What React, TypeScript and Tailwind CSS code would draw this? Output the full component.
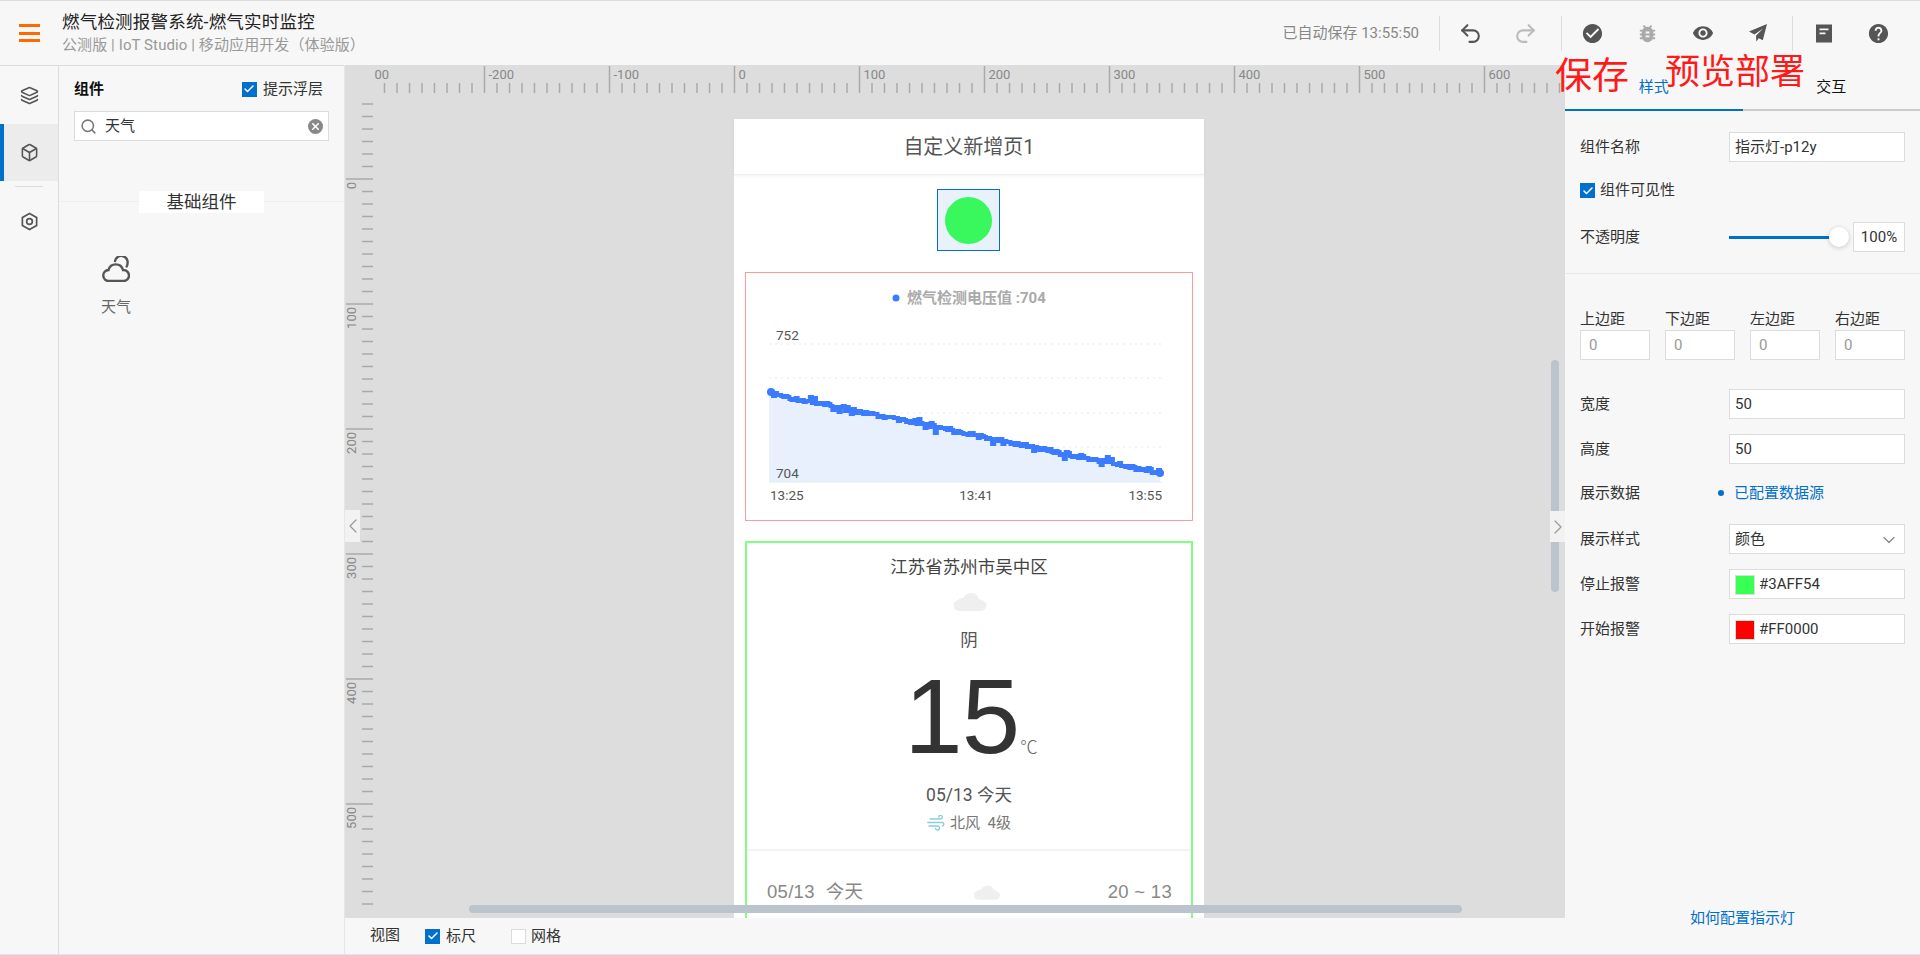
import {
  ChevronDown,
  ChevronLeft,
  ChevronRight,
  Layers,
  Box,
  Search,
  Check,
  Undo2,
  Redo2,
  X,
} from 'lucide-react';
import { MdBugReport, MdCheckCircle, MdHelp, MdVisibility } from 'react-icons/md';

const HEADER_ICONS = 'flex h-[55px] w-[55px] items-center justify-center';

// ruler: 100 units = 125px because the page was taken at 125% zoom
function Rulers() {
  const hTicks = [];
  for (let k = -31; k < 68; k++) hTicks.push(k);
  const vTicks = [];
  for (let k = -6; k < 59; k++) vTicks.push(k);

  return (
    <svg className="absolute left-0 top-0" width="1221" height="853" fontFamily="Roboto, sans-serif">
      {hTicks.map((k) => {
        const x = 389.5 + k * 12.5;
        const major = k % 10 === 0;
        return (
          <g key={k}>
            <line x1={x} x2={x} y1={major ? 1 : 18} y2={28} stroke="#aaa" strokeWidth="1.5" />
            {major && (
              <text x={x + 4} y={14} fontSize="13" fill="#888">
                {k * 10}
              </text>
            )}
          </g>
        );
      })}
      <rect x="0" y="0" width="29" height="30" fill="#dddddd" />
      {vTicks.map((k) => {
        const y = 114 + k * 12.5;
        const major = k % 10 === 0;
        return (
          <g key={k}>
            <line x1={major ? 1 : 17} x2={28} y1={y} y2={y} stroke="#aaa" strokeWidth="1.5" />
            {major && (
              <text
                transform={`translate(11 ${y + 3}) rotate(-90)`}
                textAnchor="end"
                fontSize="13"
                fill="#888"
              >
                {k * 10}
              </text>
            )}
          </g>
        );
      })}
    </svg>
  );
}

function noiseAt(i: number) {
  const n = Math.sin(i * 12.9898) * 43758.5453;
  return n - Math.floor(n);
}

// stepped, noisy readings falling from 121 to 200
function buildLine() {
  const steps = 190;
  let d = '';
  let first = 0;
  let lastY = 0;
  for (let i = 0; i <= steps; i++) {
    const x = 25 + (389 * i) / steps;
    const base = 121 + (79 * i) / steps;
    const spike = noiseAt(i + 300) > 0.85 ? (noiseAt(i + 600) - 0.5) * 10 : 0;
    const y = Math.round(base + (noiseAt(i) - 0.5) * 3.5 + spike);
    if (i === 0) {
      d = `M${x} ${y}`;
      first = y;
    } else {
      d += ` H${x.toFixed(1)} V${y}`;
    }
    lastY = y;
  }
  return { d, first, lastY };
}

function GasChart() {
  const { d, first, lastY } = buildLine();

  return (
    <svg width="446" height="247" fontFamily="Roboto, 'Noto Sans CJK SC', sans-serif">
      <circle cx="150" cy="25" r="3.5" fill="#3a7bff" />
      <text x="161" y="30" fontSize="15" fill="#aaa" fontWeight="700">
        燃气检测电压值 :704
      </text>
      {[71, 105, 140, 174].map((y) => (
        <line key={y} x1="23" x2="416" y1={y} y2={y} stroke="#e8e8e8" strokeDasharray="2 4" />
      ))}
      <path d={`${d} V209 H23 V${first} Z`} fill="#e8f0fe" />
      <line x1="23" x2="416" y1="209" y2="209" stroke="#e3e9f6" />
      <path d={d} fill="none" stroke="#3a7bff" strokeWidth="4" />
      <circle cx="25" cy={first} r="4" fill="#3a7bff" />
      <circle cx="414" cy={lastY} r="4" fill="#3a7bff" />
      <text x="30" y="67" fontSize="13.5" fill="#555">
        752
      </text>
      <text x="30" y="205" fontSize="13.5" fill="#555">
        704
      </text>
      <text x="24" y="227" fontSize="13.5" fill="#555">
        13:25
      </text>
      <text x="230" y="227" fontSize="13.5" fill="#555" textAnchor="middle">
        13:41
      </text>
      <text x="416" y="227" fontSize="13.5" fill="#555" textAnchor="end">
        13:55
      </text>
    </svg>
  );
}

function CloudBlob({ className }: { className: string }) {
  return (
    <svg className={className} viewBox="0 0 36 19">
      <path
        d="M7 19a6 6 0 0 1-1-11.8C7 6 9.500 5 11 5.500 13 1.500 17 0 20 0c4 0 7 2.500 8 6.500 4 .5 8 3 8 6.500a6 6 0 0 1-6 6Z"
        fill="#efefef"
      />
    </svg>
  );
}

function WindIcon() {
  return (
    <svg viewBox="0 0 18 16" className="h-[16px] w-[18px]" fill="none" stroke="#8ccbd8" strokeWidth="1.300" strokeLinecap="round">
      <path d="M3 4h10.500a1.800 1.800 0 1 0-1.800-1.800" />
      <path d="M0.700 7.500h14.800a1.800 1.800 0 0 1 0 3.500" />
      <path d="M2 11h8.500a2 2 0 1 1-2 2.200" />
    </svg>
  );
}

function Checkbox({ checked }: { checked: boolean }) {
  return (
    <span
      className={`flex h-[15px] w-[15px] shrink-0 items-center justify-center ${
        checked ? 'bg-[#0070cc]' : 'border border-[#dcdcdc] bg-white'
      }`}
    >
      {checked && <Check className="h-[12px] w-[12px] text-white" strokeWidth={3} />}
    </span>
  );
}

function Field({ children, className = '' }: { children: React.ReactNode; className?: string }) {
  return (
    <div
      className={`flex h-[30px] items-center border border-[#dcdcdc] bg-white px-[5px] pt-[1px] text-[15px] text-[#333] ${className}`}
    >
      {children}
    </div>
  );
}

function PropRow({ label, className = '', children }: { label: string; className?: string; children: React.ReactNode }) {
  return (
    <div className={`flex h-[30px] items-center ${className}`}>
      <span className="w-[149px] shrink-0 pt-[1px] text-[15px] text-[#333]">{label}</span>
      <div className="flex-1">{children}</div>
    </div>
  );
}

function ColorField({ color, value }: { color: string; value: string }) {
  return (
    <Field>
      <span className="mr-[4px] h-[20px] w-[20px] border border-[#dcdcdc]" style={{ backgroundColor: color }} />
      {value}
    </Field>
  );
}

export default function App() {
  return (
    <div className="flex h-[955px] w-[1920px] flex-col overflow-hidden border-b border-[#d3e9f2] bg-[#f7f7f7] font-['Roboto','Noto_Sans_CJK_SC',sans-serif] text-[#333]">
      {/* Header */}
      <header className="flex h-[65px] shrink-0 items-center border-t border-[#dddddd] bg-[#f7f7f7] pr-[14px]">
        <div className="ml-[19px] flex w-[21px] flex-col gap-[4.500px]">
          <span className="h-[3px] bg-[#ff6a00]" />
          <span className="h-[3px] bg-[#ff6a00]" />
          <span className="h-[3px] bg-[#ff6a00]" />
        </div>
        <div className="ml-[22px]">
          <div className="text-[17.5px] leading-[24px] tracking-[0.2px] text-[#222]">燃气检测报警系统-燃气实时监控</div>
          <div className="text-[15px] leading-[22px] tracking-[0.1px] text-[#999]">公测版 | IoT Studio | 移动应用开发（体验版）</div>
        </div>
        <div className="ml-auto mr-[20px] text-[15px] text-[#888]">已自动保存 13:55:50</div>
        <span className="h-[35px] w-px bg-[#dddddd]" />
        <div className="ml-[3px] flex">
          <span className={HEADER_ICONS}>
            <Undo2 className="h-[25px] w-[25px] text-[#555]" strokeWidth={2} />
          </span>
          <span className={HEADER_ICONS}>
            <Redo2 className="h-[25px] w-[25px] text-[#bbb]" strokeWidth={2} />
          </span>
        </div>
        <span className="ml-[8px] h-[35px] w-px bg-[#dddddd]" />
        <div className="ml-[3px] flex">
          <span className={HEADER_ICONS}>
            <MdCheckCircle className="h-[23px] w-[23px] text-[#555]" />
          </span>
          <span className={HEADER_ICONS}>
            <MdBugReport className="h-[23px] w-[23px] text-[#aaa]" />
          </span>
          <span className={HEADER_ICONS}>
            <MdVisibility className="h-[22px] w-[22px] text-[#555]" />
          </span>
          <span className={HEADER_ICONS}>
            <svg viewBox="0 0 20 20" className="h-[20px] w-[20px]" fill="#555">
              <path d="M19 1 1 8.500l5.500 3L15 5.500 8 12.800l.3 5.700 2.500-3.300 4 2Z" />
            </svg>
          </span>
        </div>
        <span className="ml-[7px] h-[35px] w-px bg-[#dddddd]" />
        <div className="ml-[3px] flex">
          <span className={HEADER_ICONS}>
            <svg viewBox="0 0 16 18" className="h-[19px] w-[16px]">
              <path fillRule="evenodd" fill="#555" d="M0 0h16v18H0ZM3.500 4v1.800h9V4ZM3.500 8v1.800h6V8Z" />
            </svg>
          </span>
          <span className={HEADER_ICONS}>
            <MdHelp className="h-[23px] w-[23px] text-[#555]" />
          </span>
        </div>
      </header>

      <div className="flex min-h-0 flex-1">
        {/* Left rail */}
        <nav className="w-[59px] shrink-0 border-r border-t border-[#dddddd]">
          <div className="flex h-[58px] items-center justify-center">
            <Layers className="h-[19px] w-[19px] text-[#555]" />
          </div>
          <div className="flex h-[57px] items-center justify-center border-l-[4px] border-[#0070cc] bg-[#ececec] pr-[4px]">
            <Box className="h-[19px] w-[19px] text-[#555]" />
          </div>
          <div className="mx-[15px] mt-[5px] h-px bg-[#dddddd]" />
          <div className="flex h-[68px] items-center justify-center">
            <svg viewBox="0 0 20 20" className="h-[19px] w-[19px]" fill="none" stroke="#555" strokeWidth="1.800">
              <path d="M10 1.500 17.500 5.800v8.400L10 18.500 2.500 14.200V5.800Z" />
              <circle cx="10" cy="10" r="3" />
            </svg>
          </div>
        </nav>

        {/* Component panel */}
        <aside className="w-[285px] shrink-0 border-t border-[#dddddd]">
          <div className="flex h-[45px] items-center justify-between pl-[15px] pr-[21px] pt-[1px]">
            <span className="text-[15px] font-bold text-[#111]">组件</span>
            <label className="flex items-center gap-[6px] text-[15px] text-[#333]">
              <Checkbox checked />
              提示浮层
            </label>
          </div>
          <div className="mx-[15px] flex h-[30px] items-center border border-[#dcdcdc] bg-white pl-[5px] pr-[5px] text-[15px] text-[#333]">
            <Search className="h-[17px] w-[17px] text-[#777]" strokeWidth={2.2} />
            <span className="ml-[8px]">天气</span>
            <span className="ml-auto flex h-[15px] w-[15px] items-center justify-center rounded-full bg-[#888]">
              <X className="h-[11px] w-[11px] text-white" strokeWidth={3.5} />
            </span>
          </div>
          <div className="mt-[50px] flex h-[22px] items-center justify-center bg-[linear-gradient(#0000_10px,#eeeeee_10px,#eeeeee_11px,#0000_11px)]">
            <span className="w-[125px] bg-white text-center text-[17.5px] leading-[22px] text-[#333]">基础组件</span>
          </div>
          <div className="ml-[27px] mt-[43px] flex w-[60px] flex-col items-center">
            <svg viewBox="0 0 28 26" className="h-[26px] w-[28px]" fill="none" stroke="#555" strokeWidth="2.400" strokeLinecap="round">
              <path d="M7 25a5.500 5.500 0 0 1-.5-11 7.500 7.500 0 0 1 14.500 0h.5a5.500 5.500 0 0 1 0 11Z" />
              <path d="M13 5a6 6 0 0 1 12.500 2.500c0 1-.3 2-.8 3" />
            </svg>
            <span className="mt-[14px] text-[15px] leading-[22px] text-[#666]">天气</span>
          </div>
        </aside>

        {/* Canvas */}
        <main className="flex w-[1221px] shrink-0 flex-col border-l border-[#e6e6e6]">
          <div className="relative min-h-0 flex-1 overflow-hidden bg-[#dddddd]">
            <Rulers />
            <div className="relative ml-[389px] mt-[54px] h-[900px] w-[470px] bg-white">
              <div className="flex h-[56px] items-center justify-center border-b border-[#eeeeee] text-[20px] text-[#555] shadow-[0_1px_3px_rgba(0,0,0,0.05)]">
                自定义新增页1
              </div>
              <div className="ml-[203px] mt-[14px] flex h-[62px] w-[63px] items-center justify-center border border-[#0070cc] bg-[#e9f2fa]">
                <span className="h-[47px] w-[47px] rounded-full bg-[#38f85e]" />
              </div>
              <div className="ml-[11px] mt-[21px] h-[249px] w-[448px] border border-[#ff9a9a]">
                <GasChart />
              </div>
              <div className="ml-[11px] mt-[20px] h-[500px] w-[448px] border-2 border-[#80ff80] text-center">
                <div className="mt-[12px] text-[17.5px] leading-[24px] text-[#444]">江苏省苏州市吴中区</div>
                <CloudBlob className="mx-auto mt-[14px] h-[18px] w-[35px]" />
                <div className="mt-[17px] text-[17.5px] leading-[24px] text-[#555]">阴</div>
                <div className="mt-[12px] flex h-[105px] items-end justify-center pl-[4px]">
                  <span className="font-['Liberation_Sans',sans-serif] text-[105px] leading-[105px] tracking-[-1px] text-[#333]">
                    15
                  </span>
                  <span className="mb-[12px] ml-[1px] text-[17.5px] font-light leading-[20px] text-[#666]">℃</span>
                </div>
                <div className="mt-[14px] text-[17.5px] leading-[24px] text-[#555]">05/13 今天</div>
                <div className="mt-[6px] flex items-center justify-center gap-[5px] text-[15px] leading-[20px] text-[#777]">
                  <WindIcon />
                  北风&nbsp;&nbsp;4级
                </div>
                <div className="mt-[16px] h-[2px] bg-[#f3f3f3]" />
                <div className="mt-[29px] flex items-center justify-between pl-[20px] pr-[19px] font-['Liberation_Sans','Noto_Sans_CJK_SC',sans-serif] text-[18.5px] leading-[24px] tracking-[0.3px] text-[#888]">
                  <span>05/13&nbsp;&nbsp;今天</span>
                  <CloudBlob className="ml-[2px] h-[15px] w-[27px]" />
                  <span>20 ~ 13</span>
                </div>
              </div>
            </div>
            {/* scrollbars and collapse handles */}
            <span className="absolute left-[124px] top-[840px] h-[8px] w-[993px] rounded-full bg-[#bbc3cc]" />
            <span className="absolute left-[1206px] top-[295px] h-[232px] w-[8px] rounded-full bg-[#bbc3cc]" />
            <span className="absolute left-0 top-[445px] flex h-[32px] w-[15px] items-center justify-center bg-[#f2f2f2]">
              <ChevronLeft className="h-[24px] w-[24px] shrink-0 text-[#999]" strokeWidth={1.2} />
            </span>
            <span className="absolute left-[1205px] top-[446px] flex h-[31px] w-[15px] items-center justify-center bg-[#f2f2f2]">
              <ChevronRight className="h-[24px] w-[24px] shrink-0 text-[#999]" strokeWidth={1.2} />
            </span>
          </div>
          <div className="flex h-[36px] shrink-0 items-center bg-[#f7f7f7] pl-[25px] text-[15px] text-[#333]">
            <span className="mb-[2px]">视图</span>
            <span className="ml-[25px] flex items-center gap-[6px]">
              <Checkbox checked />
              标尺
            </span>
            <span className="ml-[35px] flex items-center gap-[5px]">
              <Checkbox checked={false} />
              网格
            </span>
          </div>
        </main>

        {/* Properties panel */}
        <aside className="flex min-w-0 flex-1 flex-col">
          <div className="flex h-[46px] shrink-0 border-b-2 border-[#cccccc] text-[15px]">
            <div className="-mb-[2px] flex w-[178px] items-center justify-center border-b-2 border-[#0070cc] text-[#0070cc]">
              样式
            </div>
            <div className="flex w-[178px] items-center justify-center text-[#111]">交互</div>
          </div>
          <div className="min-h-0 flex-1 px-[15px] pt-[21px]">
            <PropRow label="组件名称">
              <Field>指示灯-p12y</Field>
            </PropRow>
            <label className="mt-[21px] flex h-[15px] items-center gap-[5px] text-[15px]">
              <Checkbox checked />
              组件可见性
            </label>
            <PropRow label="不透明度" className="mt-[24px]">
              <div className="flex items-center">
                <span className="h-[3px] w-[100px] bg-[#0070cc]" />
                <span className="h-[20px] w-[20px] rounded-full bg-white shadow-[0_1px_5px_rgba(0,0,0,0.2)]" />
                <Field className="ml-[4px] w-[52px] justify-center !px-0">100%</Field>
              </div>
            </PropRow>
            <div className="-mx-[15px] mt-[21px] border-b border-[#e8e8e8]" />
            <div className="mt-[35px] grid grid-cols-4 gap-x-[15px]">
              {['上边距', '下边距', '左边距', '右边距'].map((label) => (
                <div key={label}>
                  <div className="text-[15px] leading-[21px]">{label}</div>
                  <Field className="!px-[8px] !text-[#999]">0</Field>
                </div>
              ))}
            </div>
            <PropRow label="宽度" className="mt-[29px]">
              <Field>50</Field>
            </PropRow>
            <PropRow label="高度" className="mt-[15px]">
              <Field>50</Field>
            </PropRow>
            <div className="mt-[14px] flex h-[30px] items-center text-[15px]">
              <span className="w-[138px]">展示数据</span>
              <span className="h-[6px] w-[6px] rounded-full bg-[#0070cc]" />
              <span className="ml-[10px] text-[#0070cc]">已配置数据源</span>
            </div>
            <PropRow label="展示样式" className="mt-[16px]">
              <Field className="justify-between">
                颜色
                <ChevronDown className="h-[20px] w-[20px] text-[#888]" strokeWidth={1.5} />
              </Field>
            </PropRow>
            <PropRow label="停止报警" className="mt-[15px]">
              <ColorField color="#3AFF54" value="#3AFF54" />
            </PropRow>
            <PropRow label="开始报警" className="mt-[15px]">
              <ColorField color="#FF0000" value="#FF0000" />
            </PropRow>
          </div>
          <div className="pb-[26px] text-center text-[15px] leading-[20px] text-[#0070cc]">如何配置指示灯</div>
        </aside>
      </div>

      {/* Hand-written annotations lying over the screenshot */}
      <div className="pointer-events-none absolute left-[1555px] top-[54px] text-[37px] leading-[46px] text-[#ff1a1a]">
        保存
      </div>
      <div className="pointer-events-none absolute left-[1665px] top-[50px] text-[35px] leading-[46px] text-[#ff1a1a]">
        预览部署
      </div>
    </div>
  );
}
